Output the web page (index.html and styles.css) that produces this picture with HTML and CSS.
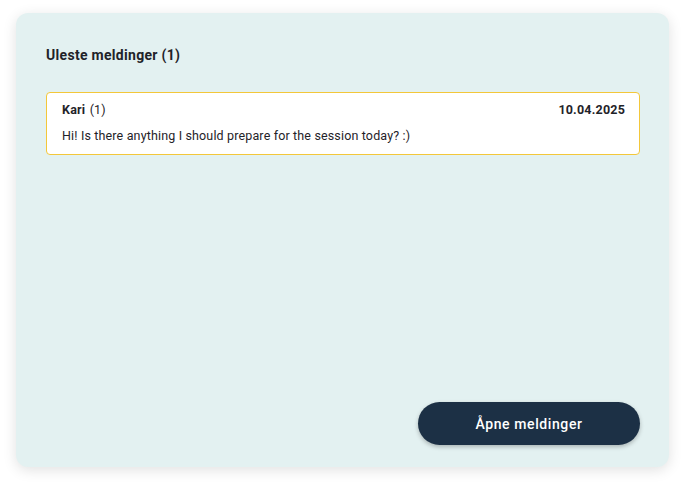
FILE: index.html
```html
<!DOCTYPE html>
<html lang="no">
<head>
    <meta charset="UTF-8">
    <meta name="viewport" content="width=device-width, initial-scale=1.0">
    <title>Uleste meldinger</title>
    <link rel="stylesheet" href="styles.css">
</head>
<body>

    <div class="card">
        <h2 class="card-title">Uleste meldinger (1)</h2>

        <div class="message">
            <div class="message-head">
                <span class="sender"><strong>Kari</strong> (1)</span>
                <span class="date">10.04.2025</span>
            </div>
            <p class="message-text">Hi! Is there anything I should prepare for the session today? :)</p>
        </div>

        <div class="actions">
            <button class="open-btn">Åpne meldinger</button>
        </div>
    </div>

</body>
</html>
```

FILE: styles.css
```css
html, body {
    height: 100%;
}
body {
    background-color: #ffffff;
    font-family: Roboto, 'Liberation Sans', sans-serif;
    margin: 0;
    padding: 13px 16px 18px 16px;
    box-sizing: border-box;
    color: #1f2329;
}
.card {
    background: #e3f1f1;
    border-radius: 12px;
    height: 100%;
    box-sizing: border-box;
    padding: 31px 29px 22px 30px;
    display: flex;
    flex-direction: column;
    box-shadow: 0 3px 14px rgba(0, 0, 0, 0.12);
}
.card-title {
    margin: 0 0 26px 0;
    font-size: 14px;
    font-weight: 700;
    letter-spacing: 0.3px;
    line-height: 22px;
}
.message {
    background: #ffffff;
    border: 1px solid #f3c73a;
    border-radius: 4px;
    padding: 9px 14px 10px 15px;
}
.message-head {
    display: flex;
    justify-content: space-between;
    align-items: center;
    font-size: 12.5px;
    letter-spacing: 0.2px;
    line-height: 16px;
}
.sender strong {
    margin-right: 1px;
}
.date {
    font-weight: 700;
}
.message-text {
    margin: 10px 0 0 0;
    font-size: 12.5px;
    letter-spacing: 0.15px;
    line-height: 16px;
}
.actions {
    margin-top: auto;
    display: flex;
    justify-content: flex-end;
}
.open-btn {
    background-color: #1c3045;
    color: #ffffff;
    border: none;
    border-radius: 22px;
    width: 222px;
    height: 43px;
    font-family: inherit;
    font-size: 14px;
    font-weight: 500;
    letter-spacing: 0.6px;
    cursor: pointer;
    box-shadow: 0 2px 4px rgba(0, 0, 0, 0.25);
}
```
